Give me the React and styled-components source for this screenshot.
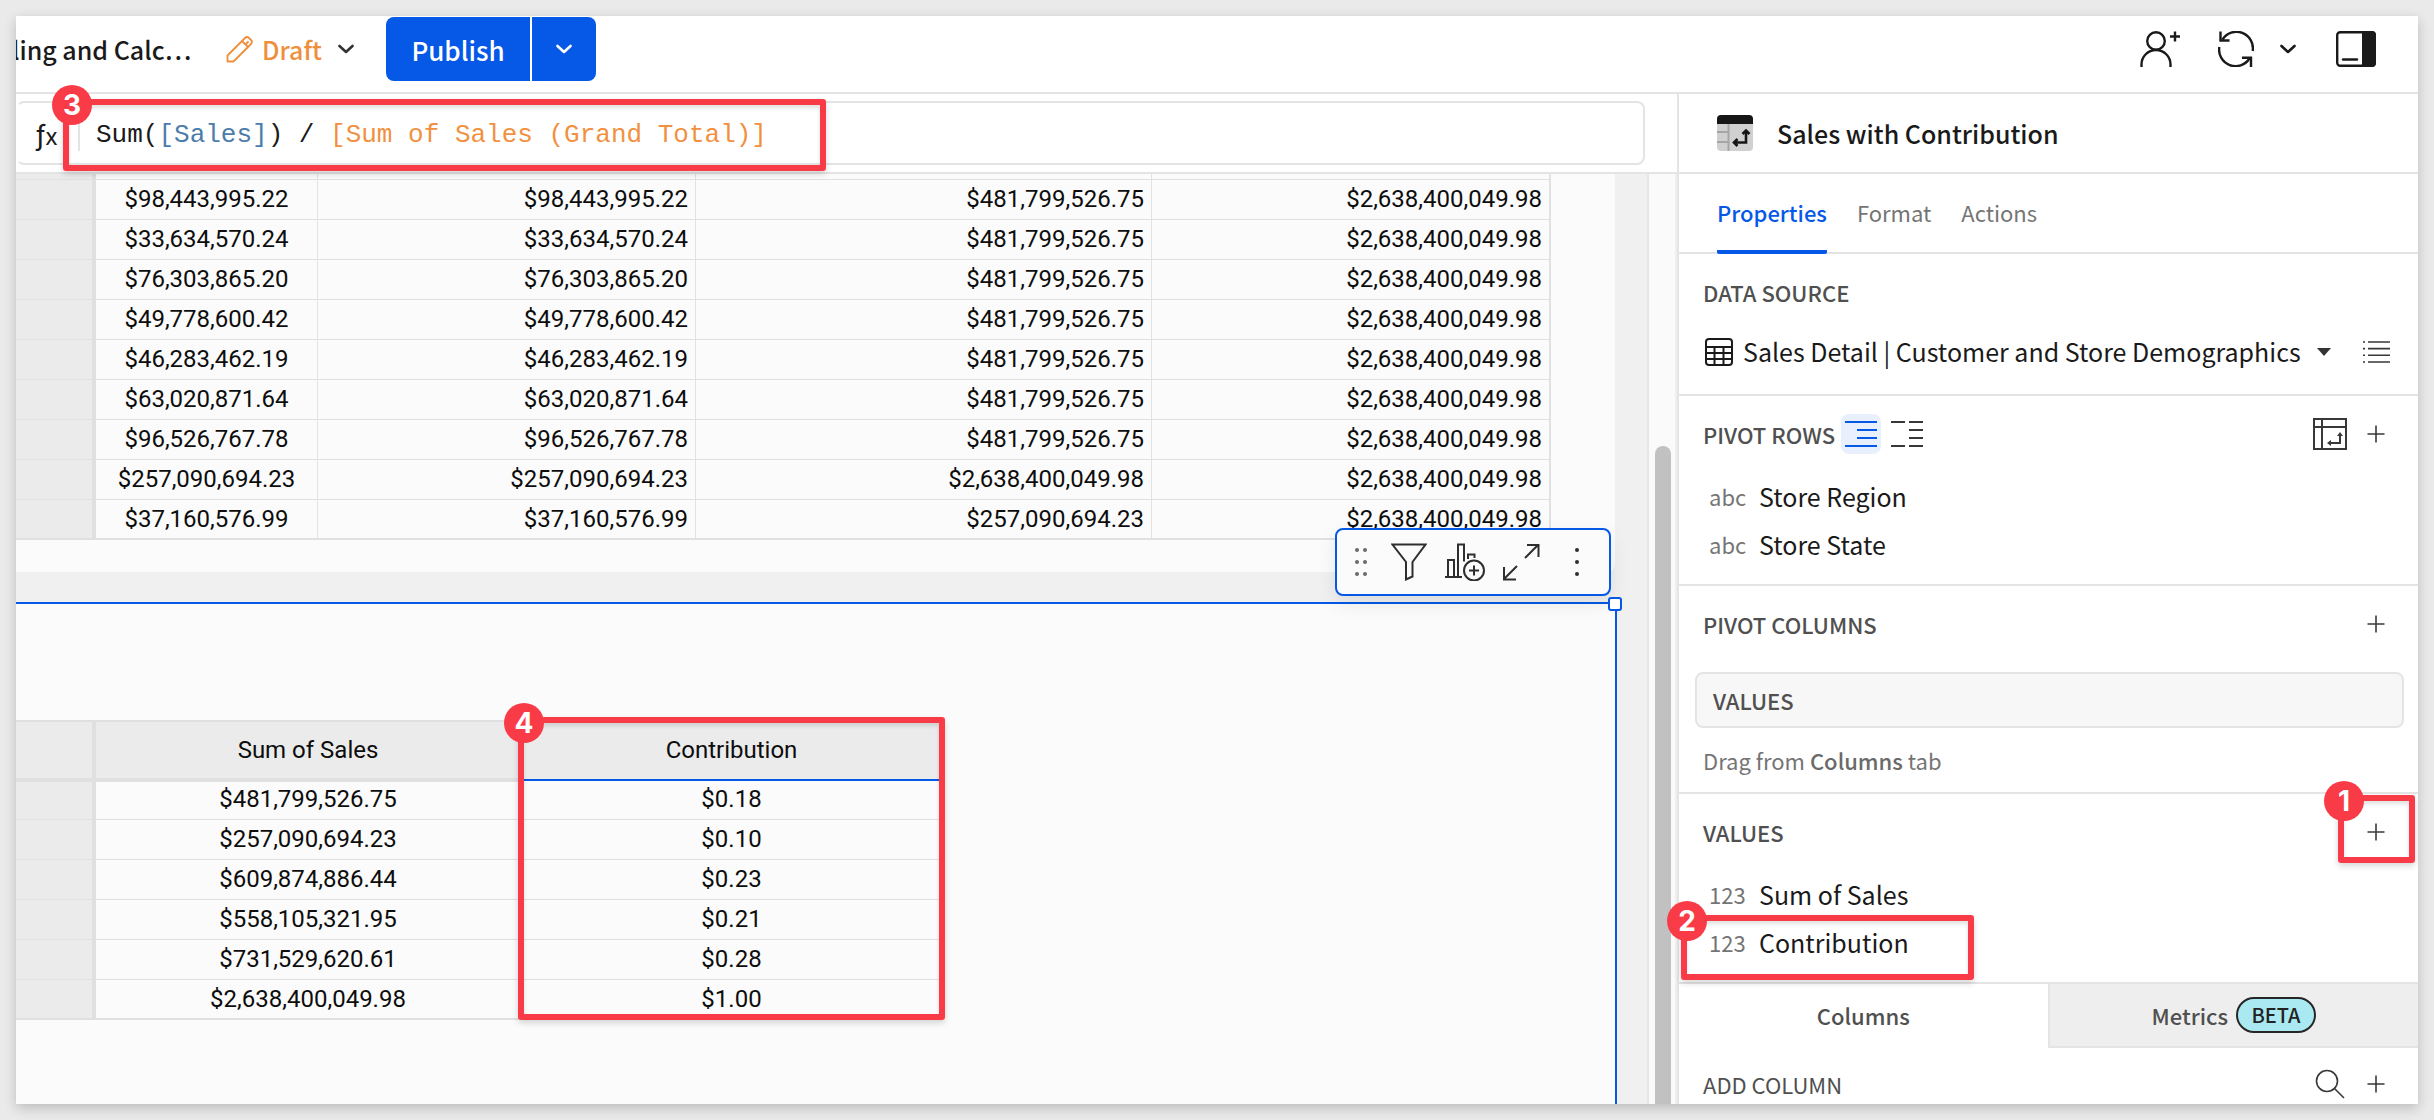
import React from "react";
import styled, { createGlobalStyle, css } from "styled-components";

const UI = `"Noto Sans CJK SC", "Noto Sans", sans-serif`;
const GRID = `Roboto, "Liberation Sans", sans-serif`;
const CODE = `"Liberation Mono", monospace`;

const BLUE = "#0559e6";
const INK = "#1a1a1a";
const LINE = "#e4e4e4";
const RED = "#f93b48";

const GlobalStyle = createGlobalStyle`
  *, *::before, *::after { box-sizing: border-box; }
  body { margin: 0; background: #eaeaea; color: ${INK}; font-family: ${UI}; font-size: 25px; }
  button { font: inherit; color: inherit; background: none; border: 0; padding: 0; cursor: pointer; }
  svg { display: block; flex: none; }
  h1, h2, p, ul { margin: 0; padding: 0; font: inherit; }
`;

/* ---------- shell ---------- */

const Page = styled.div`
  height: 100vh;
  padding: 16px;
`;

const Window = styled.div`
  position: relative;
  height: 100%;
  display: flex;
  flex-direction: column;
  overflow: hidden;
  background: #fff;
  box-shadow: 0 4px 12px rgba(0, 0, 0, 0.2);
`;

const Body = styled.div`
  flex: 1;
  min-height: 0;
  display: flex;
`;

const Main = styled.main`
  flex: 1;
  min-width: 0;
  display: flex;
  flex-direction: column;
`;

/* ---------- top bar ---------- */

const TopBar = styled.header`
  flex: none;
  display: flex;
  align-items: center;
  height: 78px;
  padding: 0 42px 10px 0;
  border-bottom: 2px solid ${LINE};
`;

/* The start of a long title runs under the left edge. */
const DocTitle = styled.h1`
  width: 210px;
  overflow: hidden;
  white-space: nowrap;
  text-indent: -4px;
  font-weight: 500;
`;

const DraftButton = styled.button`
  width: 160px;
  display: flex;
  align-items: center;
  gap: 8px;
  color: #ef8f3c;
  font-weight: 500;
`;

const DraftChevron = styled.span`
  margin-left: 8px;
  color: #333;
`;

const SplitButton = styled.div`
  display: flex;
  gap: 2px;
  height: 64px;
  border-radius: 8px;
  overflow: hidden;
`;

const SplitPart = styled.button`
  width: ${(p) => p.$width}px;
  display: flex;
  align-items: center;
  justify-content: center;
  background: ${BLUE};
  color: #fff;
  font-size: 26px;
  font-weight: 500;
`;

const TopActions = styled.div`
  margin-left: auto;
  display: flex;
  align-items: center;
`;

const TopAction = styled.button`
  margin-left: ${(p) => p.$gap}px;
`;

/* ---------- formula bar ---------- */

const FormulaBar = styled.div`
  position: relative;
  flex: none;
  height: 80px;
  padding: 7px 32px 7px 0;
  border-bottom: 2px solid ${LINE};
`;

const FormulaBox = styled.div`
  display: flex;
  align-items: center;
  height: 64px;
  border: 2px solid ${LINE};
  border-left-color: transparent;
  border-radius: 8px;
`;

const FxButton = styled.button`
  width: 60px;
  padding-left: 18px;
  display: flex;
  align-items: baseline;
  font-family: ${GRID};
  font-size: 28px;
  line-height: 32px;
`;

const FxSub = styled.span`
  padding-top: 4px;
  font-family: ${UI};
  font-size: 24px;
  line-height: 32px;
`;

const FormulaInput = styled.div`
  flex: 1;
  padding: 4px 0 0 16px;
  border-left: 2px solid ${LINE};
  font-family: ${CODE};
  font-size: 26px;
  line-height: 32px;
  white-space: pre;
  outline: none;
`;

const Token = styled.span`
  color: ${(p) => (p.$kind === "column" ? "#4c7cab" : "#f1913f")};
`;

/* ---------- canvas ---------- */

const CanvasRow = styled.div`
  flex: 1;
  min-height: 0;
  display: flex;
`;

const Canvas = styled.section`
  flex: 1;
  min-width: 0;
  display: flex;
  flex-direction: column;
  gap: 30px;
  background: #f0f0f0;
`;

const ScrollTrack = styled.div`
  flex: none;
  width: 30px;
  padding: 272px 4px 0 6px;
  background: #fafafa;
  border-left: 2px solid #e6e6e6;
  border-right: 2px solid #efefef;
`;

const ScrollThumb = styled.div`
  width: 16px;
  height: 100%;
  border-radius: 8px 8px 0 0;
  background: #c1c1c1;
`;

const UpperElement = styled.div`
  flex: none;
  margin-right: 32px;
  padding-bottom: 32px;
  border-bottom-right-radius: 8px;
  background: #fbfbfb;
`;

const SelectedElement = styled.div`
  position: relative;
  flex: 1;
  margin-right: 30px;
  padding-top: 116px;
  background: #fbfbfb;
  border: 2px solid ${BLUE};
  border-width: 2px 2px 0 0;
`;

const Handle = styled.span`
  position: absolute;
  top: -7px;
  right: -7px;
  width: 14px;
  height: 14px;
  border: 2px solid ${BLUE};
  border-radius: 3px;
  background: #fff;
`;

const ElementToolbar = styled.div`
  position: absolute;
  top: -76px;
  right: 4px;
  display: flex;
  height: 68px;
  padding: 0 4px;
  border: 2px solid ${BLUE};
  border-radius: 8px;
  background: #fbfbfb;
  box-shadow: 0 8px 20px rgba(0, 0, 0, 0.08);
`;

const ToolButton = styled.button`
  width: ${(p) => p.$width || 56}px;
  display: flex;
  align-items: center;
  justify-content: center;
  color: #2e2e2e;
`;

/* ---------- pivot tables ---------- */

const TableWrap = styled.div`
  position: relative;
  width: max-content;
`;

const PivotTable = styled.table`
  table-layout: fixed;
  width: ${(p) => p.$width}px;
  border-collapse: separate;
  border-spacing: 0;
  font-family: ${GRID};
  font-size: 24px;
  line-height: 32px;
  color: #0d0d0d;
`;

const cell = css`
  height: ${(p) => p.$height || 40}px;
  padding: 0 7px ${(p) => (p.$last ? 3 : 4)}px;
  border-bottom: ${(p) => (p.$last ? 2 : 1)}px solid #e0e0e0;
  vertical-align: bottom;
`;

const RowHead = styled.th`
  ${cell}
  background: #ebebeb;
  border-right: 4px solid #e0e0e0;
`;

const Cell = styled.td`
  ${cell}
  text-align: ${(p) => p.$align || "right"};
  border-right: ${(p) => p.$edge || 0}px solid #e2e2e2;
`;

const ColHead = styled.th`
  height: 62px;
  padding: 0;
  background: #ebebeb;
  border-top: 2px solid #e0e0e0;
  border-bottom: 4px solid #e0e0e0;
  font-weight: 400;
  ${(p) =>
    p.$corner &&
    css`
      border-right: 4px solid #e0e0e0;
    `}
  ${(p) =>
    p.$active &&
    css`
      padding-bottom: 3px;
      border-bottom: 1px solid #fbfbfb;
      box-shadow: inset 0 -2px ${BLUE};
    `}
`;

/* ---------- side panel ---------- */

const Panel = styled.aside`
  position: relative;
  flex: none;
  width: 741px;
  display: flex;
  flex-direction: column;
  background: #fff;
  border-left: 2px solid ${LINE};
`;

const PanelTitle = styled.div`
  flex: none;
  display: flex;
  align-items: center;
  gap: 24px;
  height: 80px;
  padding: 0 38px;
  border-bottom: 2px solid ${LINE};
  font-weight: 500;
`;

const Tabs = styled.nav`
  flex: none;
  display: flex;
  gap: 30px;
  height: 80px;
  padding: 0 38px;
  border-bottom: 2px solid ${LINE};
`;

const Tab = styled.button`
  height: 80px;
  padding-bottom: ${(p) => (p.$active ? 0 : 4)}px;
  border-bottom: ${(p) => (p.$active ? 4 : 0)}px solid ${BLUE};
  border-radius: 2px;
  color: ${(p) => (p.$active ? BLUE : "#757575")};
  font-size: 22px;
  font-weight: ${(p) => (p.$active ? 500 : 400)};
`;

const Section = styled.section`
  position: relative;
  flex: none;
  padding-bottom: ${(p) => p.$bottom || 0}px;
  border-bottom: 2px solid ${LINE};
`;

const SectionHead = styled.div`
  flex: none;
  display: flex;
  align-items: center;
  gap: 6px;
  height: ${(p) => p.$height || 76}px;
  padding: 0 22px 0 24px;
  color: #505050;
  font-size: 22px;
  font-weight: ${(p) => p.$weight || 500};
`;

const Spacer = styled.span`
  flex: 1;
`;

const IconButton = styled.button`
  width: 40px;
  height: 40px;
  display: flex;
  align-items: center;
  justify-content: center;
  border-radius: 8px;
  color: ${(p) => (p.$active ? BLUE : "#383838")};
  background: ${(p) => (p.$active ? "#e9f0fd" : "transparent")};
`;

const SourceRow = styled.div`
  display: flex;
  align-items: center;
  height: 44px;
  padding: 0 22px 0 26px;
`;

const SourceSelect = styled.select`
  appearance: none;
  margin: 0 16px 0 10px;
  padding: 0 0 2px;
  border: 0;
  background: none;
  color: ${INK};
  font: 400 25px/40px ${UI};
`;

const FieldList = styled.ul`
  list-style: none;
`;

const Field = styled.li`
  display: flex;
  align-items: center;
  height: 48px;
  padding-left: 30px;
`;

const FieldType = styled.span`
  width: 50px;
  color: #757575;
  font-size: 22px;
`;

const DropZone = styled.div`
  display: flex;
  align-items: center;
  height: 56px;
  margin: 10px 14px 0 16px;
  padding: 0 16px;
  border: 2px solid ${LINE};
  border-radius: 8px;
  background: #f7f7f7;
  color: #505050;
  font-size: 22px;
  font-weight: 500;
`;

const Hint = styled.p`
  padding: 0 24px;
  color: #757575;
  font-size: 22px;
  line-height: 64px;
  b { font-weight: 500; color: #6a6a6a; }
`;

const BottomTabs = styled.div`
  flex: none;
  display: flex;
  height: 64px;
`;

const BottomTab = styled.button`
  flex: 1;
  display: flex;
  align-items: center;
  justify-content: center;
  gap: 8px;
  padding-bottom: ${(p) => (p.$muted ? 0 : 2)}px;
  color: #505050;
  font-size: 22px;
  font-weight: 500;
  ${(p) =>
    p.$muted &&
    css`
      background: #eee;
      border-left: 2px solid ${LINE};
      border-bottom: 2px solid ${LINE};
    `}
`;

const Badge = styled.span`
  width: 80px;
  height: 36px;
  border: 2px solid #262626;
  border-radius: 18px;
  background: #abe9f2;
  color: #222;
  font-size: 20px;
  line-height: 32px;
  text-align: center;
`;

/* ---------- numbered callouts ---------- */

const CalloutNumber = styled.span`
  position: absolute;
  top: -20px;
  left: -20px;
  width: 40px;
  height: 40px;
  border-radius: 50%;
  background: ${RED};
  color: #fff;
  font: 700 28px/40px Inter, sans-serif;
  text-align: center;
`;

const CalloutBox = styled.div`
  position: absolute;
  z-index: 2;
  pointer-events: none;
  border: 6px solid ${RED};
  border-radius: 3px;
  box-shadow: 0 3px 6px rgba(0, 0, 0, 0.16), inset 0 3px 4px rgba(0, 0, 0, 0.12);
`;

const FormulaCallout = styled(CalloutBox)`
  top: 5px;
  left: 47px;
  width: 763px;
  height: 72px;
  ${CalloutNumber} { left: -17px; }
`;

const AddCallout = styled(CalloutBox)`
  top: 1px;
  right: 3px;
  width: 77px;
  height: 68px;
`;

const FieldCallout = styled(CalloutBox)`
  bottom: 2px;
  left: 2px;
  width: 293px;
  height: 65px;
`;

const ColumnCallout = styled(CalloutBox)`
  top: -3px;
  right: -2px;
  bottom: 0;
  width: 427px;
`;

/* ---------- icons ---------- */

const Svg = ({ w, h, sw = 2, children, ...rest }) => (
  <svg width={w} height={h} viewBox={`0 0 ${w} ${h}`} fill="none" stroke="currentColor" strokeWidth={sw} aria-hidden="true" {...rest}>
    {children}
  </svg>
);

const Chevron = () => (
  <Svg w={16} h={10} sw={2.600} strokeLinecap="round" strokeLinejoin="round">
    <path d="M1.500 2L8 8l6.500-6" />
  </Svg>
);

const Pencil = () => (
  <Svg w={28} h={28} sw={1.800} strokeLinejoin="round">
    <path d="M1.500 20.500L19 3q2-2 4 0l2 2q2 2 0 4L7.500 26.500h-6zM16 6l6 6M19.500 9.500l3-3" />
  </Svg>
);

const PersonAdd = () => (
  <Svg w={40} h={36} sw={2.400}>
    <circle cx="16" cy="10" r="8.800" />
    <path d="M1.500 36v-2.500a14.500 14.500 0 0 1 29 0V36M35 0.500v10M30 5.500h10" />
  </Svg>
);

const Refresh = () => (
  <Svg w={36} h={36} sw={2.400}>
    <path d="M1.300 16a16.500 16.500 0 0 0 30.200 11.500M34.700 20A16.500 16.500 0 0 0 4.500 8.500" />
    <path d="M2.500 0.500v9h9M24 26.800h9V36" />
  </Svg>
);

const PanelToggle = () => (
  <Svg w={40} h={36} sw={2.400}>
    <rect x="1.200" y="1.200" width="37.600" height="33.600" rx="3" />
    <path d="M26 0h10q4 0 4 4v28q0 4-4 4H26z" fill="currentColor" stroke="none" />
    <path d="M7 28.500h14" strokeLinecap="round" />
  </Svg>
);

const PivotBadge = () => (
  <Svg w={36} h={36}>
    <path d="M0 9h36v23q0 4-4 4H4q-4 0-4-4z" fill="#d0d0d0" stroke="none" />
    <path d="M0 9V4q0-4 4-4h28q4 0 4 4v5z" fill="#161616" stroke="none" />
    <path d="M11.500 9v27M0 17h11M0 27h11" stroke="#a6a6a6" />
    <path d="M29 16v11.500H18M25.500 19l3.500-3.500 3.500 3.500M20.500 24L17 27.500l3.500 3.500" stroke="#161616" strokeWidth="2.600" />
  </Svg>
);

const TableIcon = () => (
  <Svg w={28} h={28}>
    <rect x="1" y="1" width="26" height="26" rx="3" />
    <path d="M1 9h26M1 15h26M1 21h26M9.500 9v18M18.500 9v18" />
  </Svg>
);

const ListIcon = () => (
  <Svg w={28} h={22} sw={1.600}>
    <path d="M6 1h22M6 7.600h22M6 14.300h22M6 21h22M1 1h2M1 7.600h2M1 14.300h2M1 21h2" />
  </Svg>
);

const Caret = () => (
  <Svg w={14} h={8} stroke="none">
    <path d="M0 0h14L7 8z" fill="#333" />
  </Svg>
);

const NestedRows = () => (
  <Svg w={32} h={26}>
    <path d="M0 1h32M12 9h20M12 17h20M0 25h32" />
  </Svg>
);

const SeparateRows = () => (
  <Svg w={32} h={26}>
    <path d="M0 1h14M18 1h14M18 9h14M18 17h14M0 25h14M18 25h14" />
  </Svg>
);

const PivotSwap = () => (
  <Svg w={34} h={32}>
    <path d="M1 1h32v30H1zM1 9h32M9 1v30M27 17v8H17" />
    <path d="M24 18l3-4 3 4zM18 22l-4 3 4 3z" fill="currentColor" stroke="none" />
  </Svg>
);

const Plus = () => (
  <Svg w={18} h={18} sw={1.600}>
    <path d="M9 0.500v17M0.500 9h17" />
  </Svg>
);

const SearchIcon = () => (
  <Svg w={30} h={30} sw={1.600}>
    <circle cx="12" cy="12" r="10.500" />
    <path d="M19.500 19.500l9.500 9.500" />
  </Svg>
);

const DragDots = () => (
  <Svg w={12} h={28} stroke="none">
    {[2, 14, 26].map((y) => (
      <g key={y} fill="#6b6b6b">
        <circle cx="2" cy={y} r="2" />
        <circle cx="10" cy={y} r="2" />
      </g>
    ))}
  </Svg>
);

const Funnel = () => (
  <Svg w={36} h={38}>
    <path d="M1.500 1.500h33L21.500 19v14.500L15 36.500V19z" />
  </Svg>
);

const ChartAdd = () => (
  <Svg w={40} h={38}>
    <path d="M0 34h17M3 34V17h6v17M13 34V1.500h6v17M23 16v-4.500h6.500v3.500" />
    <circle cx="29" cy="27.500" r="10" />
    <path d="M29 22.500v10M24 27.500h10" />
  </Svg>
);

const Expand = () => (
  <Svg w={38} h={38}>
    <path d="M23 15L36 2M25 2h11.500v12M15 23L2 36M2 24v12.500h12" />
  </Svg>
);

const Kebab = () => (
  <Svg w={4} h={28} stroke="none">
    {[2, 14, 26].map((y) => (
      <circle key={y} cx="2" cy={y} r="2" fill="currentColor" />
    ))}
  </Svg>
);

/* ---------- data ---------- */

const stateRows = [
  ["$98,443,995.22", "$98,443,995.22", "$481,799,526.75", "$2,638,400,049.98"],
  ["$33,634,570.24", "$33,634,570.24", "$481,799,526.75", "$2,638,400,049.98"],
  ["$76,303,865.20", "$76,303,865.20", "$481,799,526.75", "$2,638,400,049.98"],
  ["$49,778,600.42", "$49,778,600.42", "$481,799,526.75", "$2,638,400,049.98"],
  ["$46,283,462.19", "$46,283,462.19", "$481,799,526.75", "$2,638,400,049.98"],
  ["$63,020,871.64", "$63,020,871.64", "$481,799,526.75", "$2,638,400,049.98"],
  ["$96,526,767.78", "$96,526,767.78", "$481,799,526.75", "$2,638,400,049.98"],
  ["$257,090,694.23", "$257,090,694.23", "$2,638,400,049.98", "$2,638,400,049.98"],
  ["$37,160,576.99", "$37,160,576.99", "$257,090,694.23", "$2,638,400,049.98"],
];

const contributionRows = [
  ["$481,799,526.75", "$0.18"],
  ["$257,090,694.23", "$0.10"],
  ["$609,874,886.44", "$0.23"],
  ["$558,105,321.95", "$0.21"],
  ["$731,529,620.61", "$0.28"],
  ["$2,638,400,049.98", "$1.00"],
];

/* ---------- parts ---------- */

const Callout = ({ as: Box, number }) => (
  <Box>
    <CalloutNumber>{number}</CalloutNumber>
  </Box>
);

const AddButton = ({ label }) => (
  <IconButton aria-label={label}>
    <Plus />
  </IconButton>
);

const Fields = ({ type, names }) => (
  <FieldList>
    {names.map((name) => (
      <Field key={name}>
        <FieldType>{type}</FieldType>
        {name}
      </Field>
    ))}
  </FieldList>
);

const StateTable = () => (
  <PivotTable $width={1535}>
    <colgroup>
      {[80, 222, 378, 456, 399].map((w) => (
        <col key={w} width={w} />
      ))}
    </colgroup>
    <tbody>
      <tr>
        <RowHead $height={6} />
        {[1, 1, 1, 2].map((edge, i) => (
          <Cell key={i} $height={6} $edge={edge} />
        ))}
      </tr>
      {stateRows.map((row, r) => {
        const last = r === stateRows.length - 1;
        return (
          <tr key={r}>
            <RowHead $last={last} />
            {row.map((value, c) => (
              <Cell key={c} $last={last} $align={c === 0 ? "center" : "right"} $edge={c === 3 ? 2 : 1}>
                {value}
              </Cell>
            ))}
          </tr>
        );
      })}
    </tbody>
  </PivotTable>
);

const ContributionTable = () => (
  <TableWrap>
    <PivotTable $width={927}>
      <colgroup>
        {[80, 424, 423].map((w) => (
          <col key={w} width={w} />
        ))}
      </colgroup>
      <thead>
        <tr>
          <ColHead $corner />
          <ColHead>Sum of Sales</ColHead>
          <ColHead $active>Contribution</ColHead>
        </tr>
      </thead>
      <tbody>
        {contributionRows.map((row, r) => {
          const last = r === contributionRows.length - 1;
          const height = r === 0 ? 38 : 40;
          return (
            <tr key={r}>
              <RowHead $last={last} $height={height} />
              {row.map((value, c) => (
                <Cell key={c} $last={last} $height={height} $align="center">
                  {value}
                </Cell>
              ))}
            </tr>
          );
        })}
      </tbody>
    </PivotTable>
    <Callout as={ColumnCallout} number={4} />
  </TableWrap>
);

const PropertiesPanel = () => (
  <Panel>
    <PanelTitle>
      <PivotBadge />
      <h2>Sales with Contribution</h2>
    </PanelTitle>
    <Tabs>
      <Tab $active>Properties</Tab>
      <Tab>Format</Tab>
      <Tab>Actions</Tab>
    </Tabs>
    <Section $bottom={20}>
      <SectionHead as="label" htmlFor="source">DATA SOURCE</SectionHead>
      <SourceRow>
        <TableIcon />
        <SourceSelect id="source">
          <option>Sales Detail | Customer and Store Demographics</option>
        </SourceSelect>
        <Caret />
        <Spacer />
        <IconButton aria-label="Source details">
          <ListIcon />
        </IconButton>
      </SourceRow>
    </Section>
    <Section $bottom={16}>
      <SectionHead>
        PIVOT ROWS
        <IconButton $active aria-label="Nested rows">
          <NestedRows />
        </IconButton>
        <IconButton aria-label="Separate rows">
          <SeparateRows />
        </IconButton>
        <Spacer />
        <IconButton aria-label="Swap rows and columns">
          <PivotSwap />
        </IconButton>
        <AddButton label="Add pivot row" />
      </SectionHead>
      <Fields type="abc" names={["Store Region", "Store State"]} />
    </Section>
    <Section>
      <SectionHead>
        PIVOT COLUMNS
        <Spacer />
        <AddButton label="Add pivot column" />
      </SectionHead>
      <DropZone>VALUES</DropZone>
      <Hint>
        Drag from <b>Columns</b> tab
      </Hint>
    </Section>
    <Section $bottom={16}>
      <SectionHead>
        VALUES
        <Spacer />
        <AddButton label="Add value" />
      </SectionHead>
      <Fields type="123" names={["Sum of Sales", "Contribution"]} />
      <Callout as={AddCallout} number={1} />
      <Callout as={FieldCallout} number={2} />
    </Section>
    <BottomTabs>
      <BottomTab>Columns</BottomTab>
      <BottomTab $muted>
        Metrics <Badge>BETA</Badge>
      </BottomTab>
    </BottomTabs>
    <SectionHead $height={72} $weight={400}>
      ADD COLUMN
      <Spacer />
      <IconButton aria-label="Search columns">
        <SearchIcon />
      </IconButton>
      <AddButton label="Add column" />
    </SectionHead>
  </Panel>
);

export default function App() {
  return (
    <Page>
      <GlobalStyle />
      <Window>
        <TopBar>
          <DocTitle>ling and Calc…</DocTitle>
          <DraftButton>
            <Pencil />
            Draft
            <DraftChevron>
              <Chevron />
            </DraftChevron>
          </DraftButton>
          <SplitButton>
            <SplitPart $width={144}>Publish</SplitPart>
            <SplitPart $width={64} aria-label="Publish options">
              <Chevron />
            </SplitPart>
          </SplitButton>
          <TopActions>
            <TopAction aria-label="Share">
              <PersonAdd />
            </TopAction>
            <TopAction $gap={38} aria-label="Refresh">
              <Refresh />
            </TopAction>
            <TopAction $gap={26} aria-label="Refresh options">
              <Chevron />
            </TopAction>
            <TopAction $gap={40} aria-label="Toggle panel">
              <PanelToggle />
            </TopAction>
          </TopActions>
        </TopBar>
        <Body>
          <Main>
            <FormulaBar>
              <FormulaBox>
                <FxButton aria-label="Functions">
                  ƒ<FxSub>x</FxSub>
                </FxButton>
                <FormulaInput role="textbox" aria-label="Formula" tabIndex={0}>
                  Sum(<Token $kind="column">[Sales]</Token>) / <Token>[Sum of Sales (Grand Total)]</Token>
                </FormulaInput>
              </FormulaBox>
              <Callout as={FormulaCallout} number={3} />
            </FormulaBar>
            <CanvasRow>
              <Canvas>
                <UpperElement>
                  <StateTable />
                </UpperElement>
                <SelectedElement>
                  <ContributionTable />
                  <ElementToolbar>
                    <ToolButton $width={40} aria-label="Drag">
                      <DragDots />
                    </ToolButton>
                    <ToolButton aria-label="Filter">
                      <Funnel />
                    </ToolButton>
                    <ToolButton aria-label="Add chart">
                      <ChartAdd />
                    </ToolButton>
                    <ToolButton aria-label="Expand">
                      <Expand />
                    </ToolButton>
                    <ToolButton aria-label="More">
                      <Kebab />
                    </ToolButton>
                  </ElementToolbar>
                  <Handle />
                </SelectedElement>
              </Canvas>
              <ScrollTrack>
                <ScrollThumb />
              </ScrollTrack>
            </CanvasRow>
          </Main>
          <PropertiesPanel />
        </Body>
      </Window>
    </Page>
  );
}
